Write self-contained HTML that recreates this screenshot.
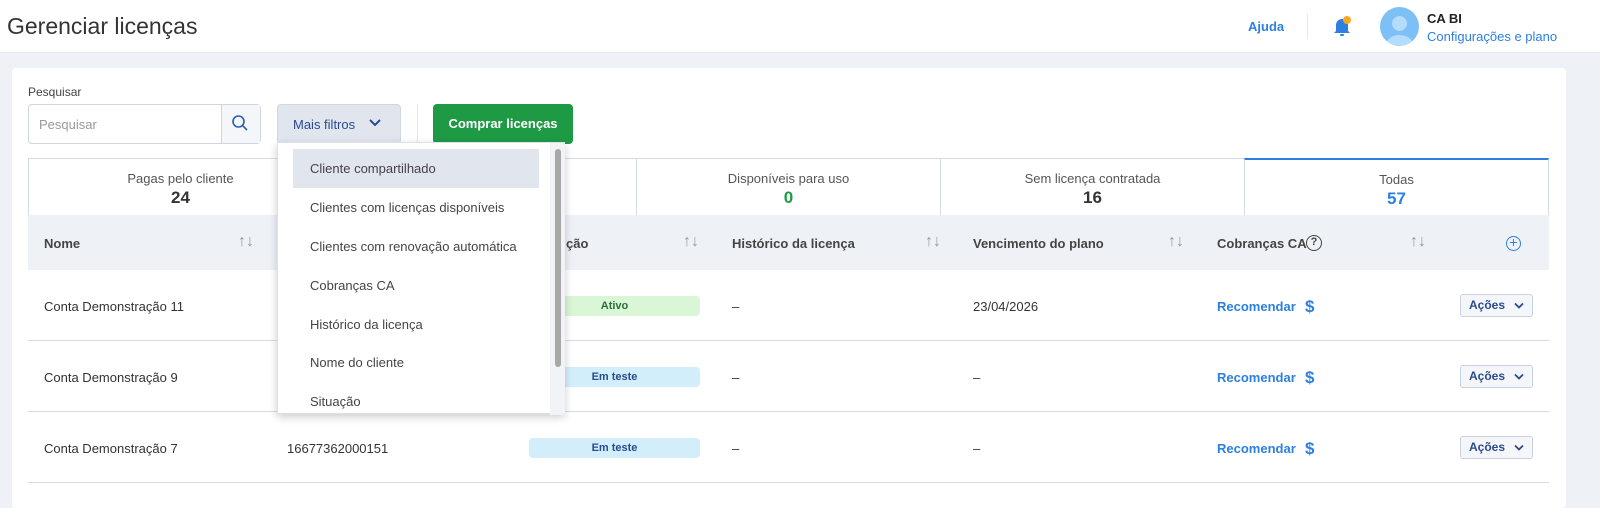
<!DOCTYPE html>
<html><head><meta charset="utf-8"><style>
*{box-sizing:border-box;margin:0;padding:0}
body{width:1600px;height:494px;overflow:hidden;background:#eef1f6;font-family:"Liberation Sans",sans-serif;color:#333;position:relative}
.abs{position:absolute}
.hdr{left:0;top:0;width:1600px;height:53px;background:#fff;border-bottom:1px solid #e3e7ee}
.card{left:12px;top:68px;width:1554px;height:440px;background:#fff;border-radius:4px}
.t{position:absolute;white-space:nowrap}
.tab{position:absolute;top:158px;height:58px;border:1px solid #d5dbe5;background:#fff;text-align:center;font-size:13px;color:#555}
.tab b{display:block;font-size:17px;color:#333;margin-top:2px}
.th{left:28px;top:215px;width:1521px;height:55px;background:#eef1f6}
.row{left:28px;width:1521px;height:71px;border-bottom:1px solid #d5dbe5}
.badge{position:absolute;left:529px;width:171px;height:20px;border-radius:4px;text-align:center;font-size:11px;font-weight:bold;line-height:20px}
.acoes{position:absolute;left:1460px;width:73px;height:23px;border:1px solid #c9d2e0;border-radius:3px;background:#f4f6fa;color:#2a4b8d;font-size:12px;font-weight:bold;line-height:21px;padding-left:8px}
.acoes svg{position:absolute;left:52px;top:7px}
.rec{position:absolute;left:1217px;font-size:13px;font-weight:bold;color:#2d7fe0;line-height:16px;white-space:nowrap}
.rec span{position:absolute;left:88px;top:-2px;font-size:17px;line-height:20px}
.dd{left:277px;top:142px;width:288px;height:272px;background:#fff;box-shadow:0 3px 8px rgba(0,0,0,.2);border:1px solid #dde2ea}
.dd div{position:absolute;left:32px;font-size:13px;color:#444}
</style></head><body>
<div class="abs hdr"></div>
<div class="t" style="left:7px;top:13px;font-size:23px;color:#333">Gerenciar licenças</div>
<div class="t" style="left:1248px;top:19px;font-size:13px;color:#2d7fe0;font-weight:bold">Ajuda</div>
<div class="abs" style="left:1307px;top:14px;width:1px;height:25px;background:#e3e7ee"></div>
<svg class="abs" style="left:1332px;top:14px" width="22" height="24" viewBox="0 0 22 24"><path d="M4 17 L4 11 A6 6 0 0 1 16 11 L16 17 L18 19 L2 19 Z" fill="#2d7fe0"/><rect x="8" y="20" width="4" height="2" rx="1" fill="#2d7fe0"/><circle cx="15" cy="6" r="4" fill="#f7a823"/></svg>
<div class="abs" style="left:1380px;top:7px;width:39px;height:39px;border-radius:50%;background:#7cc0f5;overflow:hidden"><div class="abs" style="left:12px;top:9px;width:15px;height:15px;border-radius:50%;background:#b6dcfb"></div><div class="abs" style="left:6px;top:28px;width:27px;height:20px;border-radius:50%;background:#b6dcfb"></div></div>
<div class="t" style="left:1427px;top:11px;font-size:13px;font-weight:bold;color:#222">CA BI</div>
<div class="t" style="left:1427px;top:29px;font-size:13px;color:#2d7fe0">Configurações e plano</div>

<div class="abs card"></div>
<div class="t" style="left:28px;top:85px;font-size:12px;color:#444">Pesquisar</div>
<div class="abs" style="left:28px;top:104px;width:233px;height:40px;border:1px solid #cfd6e2;border-radius:4px;background:#fff"></div>
<div class="abs" style="left:221px;top:105px;width:39px;height:38px;border-left:1px solid #cfd6e2;background:#f4f6fa"></div>
<svg class="abs" style="left:231px;top:114px" width="18" height="18" viewBox="0 0 18 18"><circle cx="7.5" cy="7.5" r="5.5" stroke="#2a5fb0" stroke-width="1.6" fill="none"/><path d="M11.5 11.5 L16 16" stroke="#2a5fb0" stroke-width="1.6"/></svg>
<div class="t" style="left:39px;top:117px;font-size:13px;color:#999">Pesquisar</div>
<div class="abs" style="left:277px;top:104px;width:124px;height:40px;background:#e0e5ee;border:1px solid #d0d7e3;border-radius:4px"></div>
<div class="t" style="left:293px;top:117px;font-size:13px;color:#2a4b8d">Mais filtros</div>
<svg class="abs" style="left:368px;top:117px" width="14" height="12"><path d="M2 3 L7 8 L12 3" stroke="#2a4b8d" stroke-width="2" fill="none"/></svg>
<div class="abs" style="left:417px;top:104px;width:1px;height:40px;background:#e3e7ee"></div>
<div class="abs" style="left:433px;top:104px;width:140px;height:40px;background:#1e9a45;border-radius:4px;color:#fff;font-size:13px;font-weight:bold;text-align:center;line-height:40px">Comprar licenças</div>

<div class="tab" style="left:28px;width:305px;padding-top:12px">Pagas pelo cliente<b>24</b></div>
<div class="tab" style="left:332px;width:305px"></div>
<div class="tab" style="left:636px;width:305px;padding-top:12px">Disponíveis para uso<b style="color:#1e9a45">0</b></div>
<div class="tab" style="left:940px;width:305px;padding-top:12px">Sem licença contratada<b>16</b></div>
<div class="tab" style="left:1244px;width:305px;padding-top:12px;border-top:2px solid #2d7fe0">Todas<b style="color:#2d7fe0">57</b></div>

<div class="abs th"></div>
<div class="t" style="left:44px;top:236px;font-size:13px;font-weight:bold;color:#444">Nome</div>
<div class="t" style="left:566px;top:236px;font-size:13px;font-weight:bold;color:#444">ção</div>
<div class="t" style="left:732px;top:236px;font-size:13px;font-weight:bold;color:#444">Histórico da licença</div>
<div class="t" style="left:973px;top:236px;font-size:13px;font-weight:bold;color:#444">Vencimento do plano</div>
<div class="t" style="left:1217px;top:236px;font-size:13px;font-weight:bold;color:#444">Cobranças CA</div>
<div class="abs" style="left:1306px;top:235px;width:16px;height:16px;border:1.5px solid #444;border-radius:50%;font-size:11px;font-weight:bold;text-align:center;line-height:13px;color:#444">?</div>
<div class="t" style="left:238px;top:233px;font-size:16px;color:#999">↑↓</div>
<div class="t" style="left:683px;top:233px;font-size:16px;color:#999">↑↓</div>
<div class="t" style="left:925px;top:233px;font-size:16px;color:#999">↑↓</div>
<div class="t" style="left:1168px;top:233px;font-size:16px;color:#999">↑↓</div>
<div class="t" style="left:1410px;top:233px;font-size:16px;color:#999">↑↓</div>
<div class="abs" style="left:1506px;top:236px;width:15px;height:15px;border:1.5px solid #2d7fe0;border-radius:50%;color:#2d7fe0;font-size:14px;text-align:center;line-height:11px">+</div>

<div class="abs row" style="top:270px"></div>
<div class="abs row" style="top:341px"></div>
<div class="abs row" style="top:412px"></div>

<div class="t" style="left:44px;top:299px;font-size:13px;color:#333">Conta Demonstração 11</div>
<div class="t" style="left:44px;top:370px;font-size:13px;color:#333">Conta Demonstração 9</div>
<div class="t" style="left:44px;top:441px;font-size:13px;color:#333">Conta Demonstração 7</div>
<div class="t" style="left:287px;top:441px;font-size:13px;color:#333">16677362000151</div>
<div class="badge" style="top:296px;background:#d9f7d6;color:#2f6d3a">Ativo</div>
<div class="badge" style="top:367px;background:#d3eefb;color:#2a4b8d">Em teste</div>
<div class="badge" style="top:438px;background:#d3eefb;color:#2a4b8d">Em teste</div>
<div class="t" style="left:732px;top:299px;font-size:13px">–</div>
<div class="t" style="left:732px;top:370px;font-size:13px">–</div>
<div class="t" style="left:732px;top:441px;font-size:13px">–</div>
<div class="t" style="left:973px;top:299px;font-size:13px">23/04/2026</div>
<div class="t" style="left:973px;top:370px;font-size:13px">–</div>
<div class="t" style="left:973px;top:441px;font-size:13px">–</div>
<div class="rec" style="top:299px">Recomendar<span>$</span></div>
<div class="rec" style="top:370px">Recomendar<span>$</span></div>
<div class="rec" style="top:441px">Recomendar<span>$</span></div>
<div class="acoes" style="top:294px">Ações<svg width="12" height="8"><path d="M2 1.5 L6 5.5 L10 1.5" stroke="#2a4b8d" stroke-width="1.8" fill="none"/></svg></div>
<div class="acoes" style="top:365px">Ações<svg width="12" height="8"><path d="M2 1.5 L6 5.5 L10 1.5" stroke="#2a4b8d" stroke-width="1.8" fill="none"/></svg></div>
<div class="acoes" style="top:436px">Ações<svg width="12" height="8"><path d="M2 1.5 L6 5.5 L10 1.5" stroke="#2a4b8d" stroke-width="1.8" fill="none"/></svg></div>

<div class="abs dd">
<span class="abs" style="left:15px;top:6px;width:246px;height:39px;background:#e0e5ee"></span>
<span class="abs" style="left:272px;top:0;width:15px;height:272px;background:#f1f3f7"></span>
<span class="abs" style="left:277px;top:6px;width:6px;height:218px;border-radius:3px;background:#a8a8a8"></span>
<div style="top:18px">Cliente compartilhado</div>
<div style="top:57px">Clientes com licenças disponíveis</div>
<div style="top:96px">Clientes com renovação automática</div>
<div style="top:135px">Cobranças CA</div>
<div style="top:174px">Histórico da licença</div>
<div style="top:212px">Nome do cliente</div>
<div style="top:251px">Situação</div>
</div>
</body></html>
